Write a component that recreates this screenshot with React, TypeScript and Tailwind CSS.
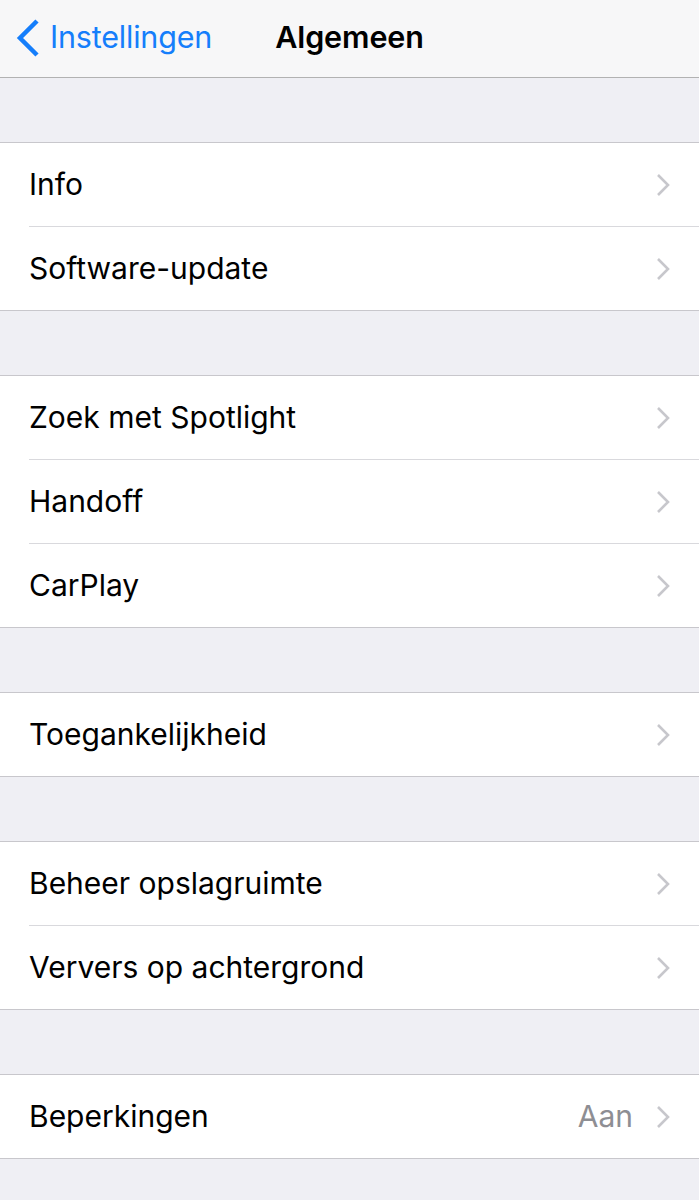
import React from "react";

type Row = { label: string; value?: string };

const SECTIONS: Row[][] = [
  [{ label: "Info" }, { label: "Software-update" }],
  [{ label: "Zoek met Spotlight" }, { label: "Handoff" }, { label: "CarPlay" }],
  [{ label: "Toegankelijkheid" }],
  [{ label: "Beheer opslagruimte" }, { label: "Ververs op achtergrond" }],
  [{ label: "Beperkingen", value: "Aan" }],
];

function Chevron() {
  return (
    <svg width="14" height="24" viewBox="0 0 14 24" className="shrink-0">
      <path d="M2 2 L12 12 L2 22" fill="none" stroke="#c7c7cc" strokeWidth="2.6" />
    </svg>
  );
}

export default function App() {
  return (
    <div
      className="min-h-[1200px] bg-[#efeff4] text-black"
      style={{ fontFamily: "Inter, 'Noto Sans', sans-serif" }}
    >
      {/* nav bar */}
      <div className="relative flex h-[78px] items-center border-b border-[#b2b2b2] bg-[#f7f7f8] pb-[4px]">
        <div className="flex items-center pl-[16px] text-[#157efb]">
          <svg width="24" height="40" viewBox="0 0 24 40" className="mt-[2px]">
            <path d="M21 3 L4 20 L21 37" fill="none" stroke="#157efb" strokeWidth="4.5" />
          </svg>
          <span className="ml-[10px] text-[30.5px] tracking-[-0.2px]">Instellingen</span>
        </div>
        <div className="pointer-events-none absolute inset-x-0 top-0 flex h-[73px] items-center justify-center">
          <span className="text-[30.5px] font-semibold tracking-[-0.1px]">Algemeen</span>
        </div>
      </div>

      <div className="flex flex-col gap-[64px] pt-[64px]">
        {SECTIONS.map((rows, si) => (
          <div key={si} className="border-y border-[#c8c7cc] bg-white">
            {rows.map((r, i) => (
              <div key={r.label} className="pl-[29px]">
                <div
                  className={`flex h-[83px] items-center pr-[29px] ${
                    i < rows.length - 1 ? "h-[84px] border-b border-[#d9d9dd]" : ""
                  }`}
                >
                  <span className="flex-1 text-[30px]">{r.label}</span>
                  {r.value && (
                    <span className="mr-[23px] text-[30px] text-[#8e8e93]">{r.value}</span>
                  )}
                  <Chevron />
                </div>
              </div>
            ))}
          </div>
        ))}
      </div>
    </div>
  );
}
